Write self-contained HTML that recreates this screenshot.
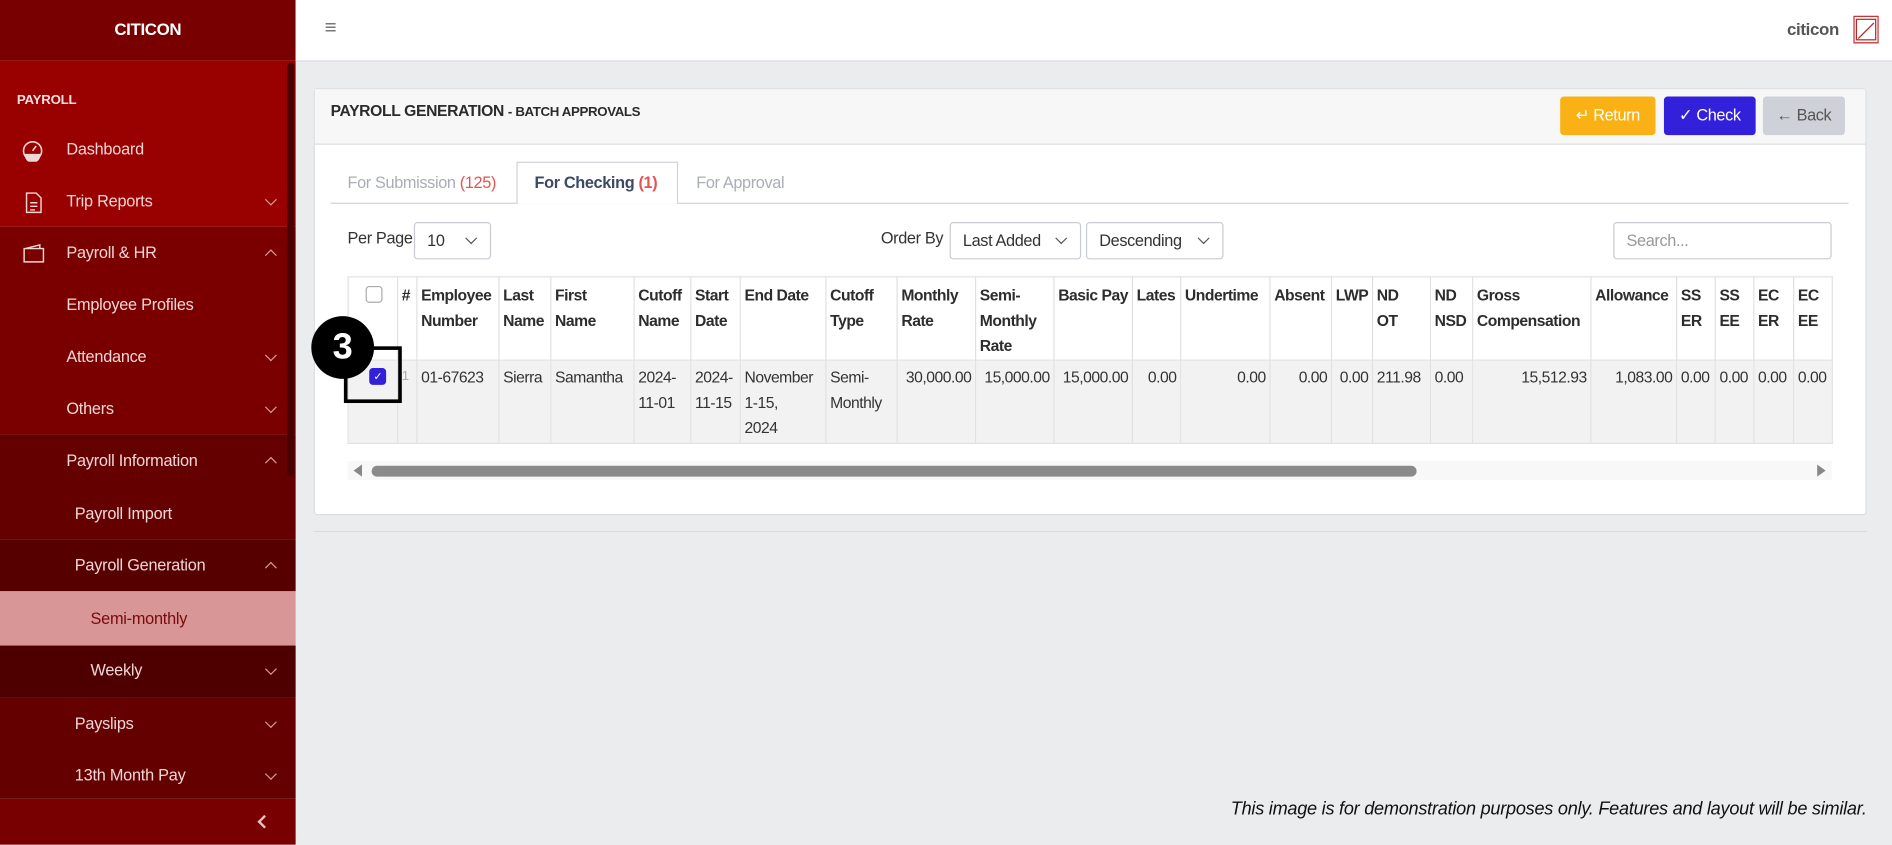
<!DOCTYPE html>
<html><head><meta charset="utf-8"><style>
*{box-sizing:border-box;margin:0;padding:0}
html,body{width:1892px;height:845px;overflow:hidden;background:#ebecee;font-family:"Liberation Sans",sans-serif}
#w{position:absolute;left:0;top:0;width:1568px;height:700px;transform:scale(1.20663);transform-origin:0 0;background:#ebecee}
.a{position:absolute}
.sb div.b{position:absolute;left:0;width:245px}
.si{position:absolute;color:#f0d6d6;font-size:13.5px;letter-spacing:-0.2px}
.chev{position:absolute;left:221px;width:7px;height:7px;border-right:1.3px solid #d49a9a;border-bottom:1.3px solid #d49a9a}
.dn{transform:rotate(45deg)}.up{transform:rotate(-135deg)}
.btn{position:absolute;top:80px;height:32px;border-radius:3px;font-size:13.5px;line-height:32px;text-align:center;color:#fff;letter-spacing:-0.3px}
.sel{position:absolute;top:184px;height:31px;border:1px solid #c8ccd2;border-radius:3px;background:#fff;font-size:13.5px;line-height:29px;color:#333;padding-left:10px;letter-spacing:-0.3px}
.sel i{position:absolute;right:12px;top:9px;width:7px;height:7px;border-right:1.3px solid #555;border-bottom:1.3px solid #555;transform:rotate(45deg)}
table{position:absolute;left:288px;top:229px;width:1230px;table-layout:fixed;border-collapse:collapse;font-size:13px;color:#333;letter-spacing:-0.4px}
td,th{border:1px solid #dfe1e5;vertical-align:top;padding:4px 3px 0;line-height:21px;text-align:left;font-weight:normal;overflow:hidden}
th{height:69px;background:#fff;color:#2d2d2d;font-weight:bold}
tr.r td{height:69px;background:#f2f2f2;padding-top:3px}
td.n{text-align:right}
</style></head><body><div id="w">
<div class="sb">
<div class="b" style="top:0;height:50px;background:#790000"></div>
<div class="b" style="top:50px;height:138px;background:#990000"></div>
<div class="b" style="top:188px;height:172px;background:#7a0000"></div>
<div class="b" style="top:360px;height:87px;background:#650000"></div>
<div class="b" style="top:447px;height:43px;background:#560000"></div>
<div class="b" style="top:490px;height:45px;background:#d99696"></div>
<div class="b" style="top:535px;height:43px;background:#4e0000"></div>
<div class="b" style="top:578px;height:84px;background:#650000"></div>
<div class="b" style="top:662px;height:38px;background:#790000"></div>
<div class="a" style="left:238px;top:52px;width:6px;height:343px;background:#4a0000;border-radius:3px"></div>
</div>
<div class="a" style="left:0;top:16px;width:245px;text-align:center;color:#fff;font-weight:bold;font-size:14px;letter-spacing:-0.3px">CITICON</div>
<div class="si" style="left:14px;top:77px;font-size:11px;font-weight:bold;color:#f3dede">PAYROLL</div>
<svg class="a" style="left:18px;top:116px" width="18" height="18" viewBox="0 0 18 18"><circle cx="9" cy="9" r="7.5" fill="none" stroke="#f0d6d6" stroke-width="1.3"/><path d="M2.5 11.5h13v1a6.5 6.5 0 0 1-13 0z" fill="#f0d6d6"/><path d="M9 9l3-4" stroke="#f0d6d6" stroke-width="1.3"/></svg>
<div class="si" style="left:55px;top:116px">Dashboard</div>
<svg class="a" style="left:21px;top:159px" width="14" height="18" viewBox="0 0 14 18"><path d="M1 1h8l4 4v12H1z M4 9h6M4 12h6M4 15h4" fill="none" stroke="#f0d6d6" stroke-width="1.2"/></svg>
<div class="si" style="left:55px;top:159px">Trip Reports</div><div class="chev dn" style="top:162px"></div>
<svg class="a" style="left:19px;top:202px" width="18" height="16" viewBox="0 0 18 16"><path d="M1 4h16v11H1z M2 4l12-3v3" fill="none" stroke="#f0d6d6" stroke-width="1.2"/></svg>
<div class="si" style="left:55px;top:202px">Payroll &amp; HR</div><div class="chev up" style="top:208px"></div>
<div class="si" style="left:55px;top:245px">Employee Profiles</div>
<div class="si" style="left:55px;top:288px">Attendance</div><div class="chev dn" style="top:291px"></div>
<div class="si" style="left:55px;top:331px">Others</div><div class="chev dn" style="top:334px"></div>
<div class="si" style="left:55px;top:374px">Payroll Information</div><div class="chev up" style="top:380px"></div>
<div class="si" style="left:62px;top:418px">Payroll Import</div>
<div class="si" style="left:62px;top:461px">Payroll Generation</div><div class="chev up" style="top:467px"></div>
<div class="si" style="left:75px;top:505px;color:#7a0a0a">Semi-monthly</div>
<div class="si" style="left:75px;top:548px">Weekly</div><div class="chev dn" style="top:551px"></div>
<div class="si" style="left:62px;top:592px">Payslips</div><div class="chev dn" style="top:595px"></div>
<div class="si" style="left:62px;top:635px">13th Month Pay</div><div class="chev dn" style="top:638px"></div>
<div class="a" style="left:215px;top:677px;width:8px;height:8px;border-left:2px solid #e8c0c0;border-bottom:2px solid #e8c0c0;transform:rotate(45deg)"></div>

<div class="a" style="left:245px;top:0;width:1323px;height:51px;background:#fff;border-bottom:1px solid #d8dbe0"></div>
<div class="a" style="left:269px;top:12px;font-size:17px;color:#777;line-height:22px">&#8801;</div>
<div class="a" style="left:1481px;top:16px;font-size:14px;font-weight:bold;color:#555;letter-spacing:-0.3px">citicon</div>
<svg class="a" style="left:1536px;top:13px" width="21" height="23" viewBox="0 0 21 23"><rect x="0.5" y="0.5" width="20" height="22" fill="#fff" stroke="#b22" stroke-width="1"/><rect x="2.5" y="3" width="16" height="17" fill="none" stroke="#b22" stroke-width="1"/><path d="M4 19L17 6" stroke="#b22" stroke-width="1"/></svg>

<div class="a" style="left:260px;top:73px;width:1287px;height:354px;background:#fff;border:1px solid #dcdee2;border-radius:3px"></div>
<div class="a" style="left:261px;top:74px;width:1285px;height:46px;background:#f7f7f7;border-bottom:1px solid #dcdee2"></div>
<div class="a" style="left:274px;top:84px;font-size:13px;font-weight:bold;color:#2b2b2b;letter-spacing:-0.3px">PAYROLL GENERATION <span style="font-size:11px">- BATCH APPROVALS</span></div>
<div class="btn" style="left:1293px;width:79px;background:#f9b115">&#8629; Return</div>
<div class="btn" style="left:1379px;width:76px;background:#3320db">&#10003; Check</div>
<div class="btn" style="left:1461px;width:68px;background:#ced2d8;color:#555">&#8592; Back</div>

<div class="a" style="left:274px;top:168px;width:1258px;height:1px;background:#d0d3d8"></div>
<div class="a" style="left:428px;top:134px;width:134px;height:35px;background:#fff;border:1px solid #d0d3d8;border-bottom:none"></div>
<div class="a" style="left:288px;top:144px;font-size:13.5px;color:#a9aeb5;letter-spacing:-0.3px">For Submission <span style="color:#e55353">(125)</span></div>
<div class="a" style="left:443px;top:144px;font-size:13.5px;font-weight:bold;color:#3c4b64;letter-spacing:-0.3px">For Checking <span style="color:#e55353">(1)</span></div>
<div class="a" style="left:577px;top:144px;font-size:13.5px;color:#a9aeb5;letter-spacing:-0.3px">For Approval</div>

<div class="a" style="left:288px;top:190px;font-size:13.5px;color:#333;letter-spacing:-0.3px">Per Page</div>
<div class="sel" style="left:343px;width:64px">10<i></i></div>
<div class="a" style="left:730px;top:190px;font-size:13.5px;color:#333;letter-spacing:-0.3px">Order By</div>
<div class="sel" style="left:787px;width:109px">Last Added<i></i></div>
<div class="sel" style="left:900px;width:114px">Descending<i></i></div>
<div class="sel" style="left:1337px;width:181px;color:#999">Search...</div>

<table>
<colgroup><col style="width:41px"><col style="width:16px"><col style="width:68px"><col style="width:43px"><col style="width:69px"><col style="width:47px"><col style="width:41px"><col style="width:71px"><col style="width:59px"><col style="width:65px"><col style="width:65px"><col style="width:65px"><col style="width:40px"><col style="width:74px"><col style="width:51px"><col style="width:34px"><col style="width:48px"><col style="width:35px"><col style="width:98px"><col style="width:71px"><col style="width:32px"><col style="width:32px"><col style="width:33px"><col style="width:32px"></colgroup>
<tr><th><div style="width:14px;height:14px;border:1px solid #aaa;border-radius:3px;margin:3px 0 0 11px;background:#fff"></div></th><th>#</th><th>Employee Number</th><th>Last Name</th><th>First Name</th><th>Cutoff Name</th><th>Start Date</th><th>End Date</th><th>Cutoff Type</th><th>Monthly Rate</th><th>Semi-Monthly Rate</th><th>Basic Pay</th><th>Lates</th><th>Undertime</th><th>Absent</th><th>LWP</th><th>ND<br>OT</th><th>ND NSD</th><th>Gross Compensation</th><th>Allowance</th><th>SS ER</th><th>SS EE</th><th>EC ER</th><th>EC EE</th></tr>
<tr class="r"><td><div style="width:14px;height:14px;background:#3320db;border-radius:3px;margin:3px 0 0 14px;color:#fff;font-size:9px;line-height:14px;text-align:center">&#10003;</div></td><td style="color:#aaa;font-size:11px">1</td><td>01-67623</td><td>Sierra</td><td>Samantha</td><td>2024-11-01</td><td>2024-11-15</td><td>November<br>1-15,<br>2024</td><td>Semi-Monthly</td><td class="n">30,000.00</td><td class="n">15,000.00</td><td class="n">15,000.00</td><td class="n">0.00</td><td class="n">0.00</td><td class="n">0.00</td><td class="n">0.00</td><td>211.98</td><td>0.00</td><td class="n">15,512.93</td><td class="n">1,083.00</td><td>0.00</td><td>0.00</td><td>0.00</td><td>0.00</td></tr>
</table>

<div class="a" style="left:288px;top:382px;width:1230px;height:16px;background:#f8f8f8"></div>
<div class="a" style="left:308px;top:386px;width:866px;height:9px;background:#8a8a8a;border-radius:5px"></div>
<div class="a" style="left:293px;top:385px;width:0;height:0;border-top:5px solid transparent;border-bottom:5px solid transparent;border-right:7px solid #888"></div>
<div class="a" style="left:1506px;top:385px;width:0;height:0;border-top:5px solid transparent;border-bottom:5px solid transparent;border-left:7px solid #888"></div>

<div class="a" style="left:285px;top:287px;width:48px;height:47px;border:3px solid #000"></div>
<div class="a" style="left:258px;top:262px;width:52px;height:52px;border-radius:50%;background:#000;color:#fff;font-weight:bold;font-size:30px;line-height:52px;text-align:center">3</div>

<div class="a" style="left:260px;top:440px;width:1287px;height:1px;background:#d8dbe0"></div>
<div class="a" style="right:21px;top:662px;font-size:15px;font-style:italic;color:#111;letter-spacing:-0.2px">This image is for demonstration purposes only. Features and layout will be similar.</div>
</div></body></html>
